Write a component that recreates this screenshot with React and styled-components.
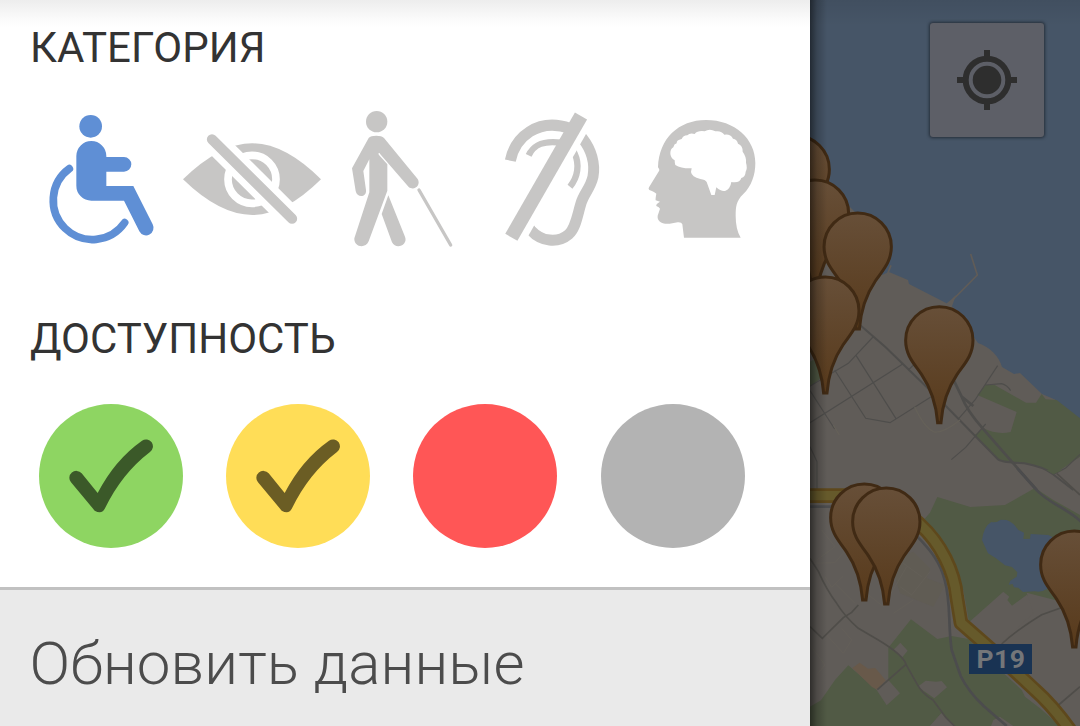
import React from "react";
import styled, { createGlobalStyle } from "styled-components";

const GlobalStyle = createGlobalStyle`
  * { box-sizing: border-box; }
  body { margin: 0; overflow: hidden; font-family: Roboto, "Liberation Sans", sans-serif; }
`;

const Screen = styled.div`
  display: flex;
  width: 1080px;
  height: 726px;
  overflow: hidden;
  background: #fff;
`;

const Drawer = styled.aside`
  display: flex;
  flex-direction: column;
  flex: 0 0 810px;
  background: linear-gradient(#ededed, #fafafa 18px, #fff 27px);
`;

const Section = styled.section`
  flex: 0 0 ${(p) => p.$height}px;
  padding-top: 23px;
`;

const Heading = styled.h2`
  margin: 0;
  padding-left: ${(p) => p.$indent}px;
  font-size: 42px;
  line-height: 50px;
  font-weight: 400;
  letter-spacing: ${(p) => p.$spacing}px;
  color: #333;
`;

const CategoryRow = styled.div`
  display: flex;
  gap: 10px;
  padding: 27px 0 0 40px;
`;

const CategoryButton = styled.button`
  display: flex;
  padding: 0;
  border: 0;
  background: none;
  color: ${(p) => (p.$active ? "#5f8fd5" : "#c7c6c5")};
`;

const LevelRow = styled.div`
  display: flex;
  gap: 43.2px;
  padding: 40px 0 0 39px;
`;

const LevelButton = styled.button`
  width: 144px;
  height: 144px;
  padding: 0;
  border: 0;
  border-radius: 50%;
  background: ${(p) => p.$color};
  svg { display: block; }
`;

const RefreshButton = styled.button`
  flex: 1;
  padding: 12px 0 0 29.5px;
  border: 0;
  border-top: 3px solid #c1c1c1;
  background: #eaeaea;
  color: #4c4c4c;
  font-family: inherit;
  font-size: 60px;
  line-height: 70px;
  font-weight: 300;
  letter-spacing: 0.13px;
  text-align: left;
`;

const MapPane = styled.main`
  position: relative;
  flex: 1;
  overflow: hidden;
  background: #465567;
`;

const MapDrawing = styled.svg`
  display: block;
`;

const MapShade = styled.div`
  position: absolute;
  inset: 0;
  background:
    linear-gradient(90deg, rgba(0, 0, 0, 0.5), rgba(0, 0, 0, 0.2) 7px, transparent 17px),
    linear-gradient(rgba(0, 0, 0, 0.07), transparent 26px);
`;

const LocateButton = styled.button`
  position: absolute;
  top: 23px;
  right: 36px;
  display: flex;
  align-items: center;
  justify-content: center;
  width: 114px;
  height: 114px;
  padding: 0;
  border: 0;
  border-radius: 3px;
  background: #5d5f67;
  box-shadow: 0 0 3px 1px rgba(20, 26, 34, 0.65);
`;

function Wheelchair() {
  return (
    <svg width="125" height="160" viewBox="30 0 375 480" fill="currentColor">
      <circle cx="182" cy="79" r="34" />
      <path d="M139 168a45 45 0 0 1 90 0v3h53a22 22 0 0 1 0 44h-53v43h81l58 115a22 22 0 0 1-40 21L282 302h-98a45 45 0 0 1-45-45Z" />
      <path d="M118 206A117.600 117.600 0 1 0 284 368" fill="none" stroke="currentColor" strokeWidth="23" strokeLinecap="round" />
    </svg>
  );
}

function LowVision() {
  return (
    <svg width="150" height="160" viewBox="0 0 450 480" fill="currentColor">
      <path d="M24 238Q135 130 232 130T438 238Q330 345 232 345T24 238Z" />
      <circle cx="231" cy="238" r="72" fill="none" stroke="#fff" strokeWidth="23" />
      <path d="M111 118L351 356" stroke="#fff" strokeWidth="72" />
      <path d="M90 80L145 135" stroke="#fff" strokeWidth="72" />
      <path d="M111 118L351 356" stroke="currentColor" strokeWidth="31" strokeLinecap="round" />
    </svg>
  );
}

function CaneWalker() {
  return (
    <svg width="130" height="160" viewBox="0 0 390 480" fill="currentColor">
      <circle cx="125" cy="65" r="32" />
      <path d="M101 114Q107 107 124 107Q140 107 147 114L248 237C259 255 238 274 221 261L136 163Q133 156 130 161L132 165L157 193V272L101 424C91 448 56 441 58 415L103 277V178L85 213L93 270C96 292 66 295 62 273L51 205Z" />
      <path d="M160 286L210 410C220 434 184 451 171 427L140 342Z" />
      <path d="M252 270L347 435" fill="none" stroke="currentColor" strokeWidth="10" strokeLinecap="round" />
    </svg>
  );
}

function HearingLoss() {
  return (
    <svg width="145" height="160" viewBox="-45 0 435 480" fill="none" stroke="currentColor">
      <path d="M61 182C75 112 143 52 240 85" strokeWidth="33" />
      <path d="M116 166C132 132 163 121 214 128" strokeWidth="19" />
      <path d="M266 100L279 117C303 148 316 190 309 230C301 266 282 279 273 310C261 349 257 385 236 403C203 431 154 425 123 391L112 378" strokeWidth="33" />
      <path d="M245 143L254 161C269 193 264 231 240 260" strokeWidth="19" />
      <path d="M71.750 442.250L300.750 38.250" stroke="#fff" strokeWidth="41" />
      <path d="M64 412L273 48" strokeWidth="42" />
    </svg>
  );
}

function HeadBrain() {
  return (
    <svg width="145" height="160" viewBox="-15 0 435 480">
      <path fill="currentColor" d="M69 202C72 115 131 60 213 60C300 60 361 117 361 189C361 226 349 258 325 282C303 303 302 321 302 348Q302 389 317 413H147L142 373Q140 366 128 367L104 371C78 373 66 362 68 347L75 326Q73 322 64 318Q62 312 75 305L62 301Q61 296 64 281Q60 277 43 270Q39 267 42 262L72 213Q75 210 69 202Z" />
      <path fill="#fff" d="M121 195Q119 188 119 181Q106 174 106 160Q106 147 115 142Q117 132 125 130Q124 120 140 117Q144 107 157 106Q164 98 179 102Q188 91 209 94Q224 85 241 94Q259 91 268 104Q286 101 294 116Q306 117 309 131Q324 137 323 155Q335 171 333 188Q338 204 332 215Q331 231 319 234Q315 250 289 246Q286 267 270 273Q258 275 244 262L239 285H229L215 246Q211 239 196 237Q170 231 168 216L170 205Q138 206 121 195Z" />
    </svg>
  );
}

function Check() {
  return (
    <svg width="144" height="144" viewBox="0 0 432 432" fill="rgba(0,0,0,0.58)">
      <path d="M96 235A20 20 0 0 1 128 208L176 267Q227 168 309 110A20 20 0 0 1 333 144Q249 208 198 313Q189 332 167 320Z" />
    </svg>
  );
}

function LocateIcon() {
  return (
    <svg width="60" height="60" viewBox="-30 -30 60 60" fill="none" stroke="#2e2e2e" strokeWidth="6">
      <circle r="21.300" />
      <circle r="14.300" fill="#2e2e2e" stroke="none" />
      <path d="M0-30V-22M0 22V30M-30 0H-22M22 0H30" />
    </svg>
  );
}

const PINS = [
  [795.7, 169.3],
  [815, 213.7],
  [857.7, 246.7],
  [825.3, 310.7],
  [939.3, 340.3],
  [864.3, 517.7],
  [886.3, 521.7],
  [1074.3, 564.7],
];

function MapPin({ x, y }) {
  return (
    <path
      transform={`translate(${x} ${y}) scale(.33333)`}
      d="M-5 247C-9 197-23 147-53 103C-73 73-101 47-101 0A101 101 0 0 1 101 0C101 47 73 73 53 103C23 147 9 197 5 247Z"
      fill="url(#pin)"
      stroke="#402a14"
      strokeWidth="9"
    />
  );
}

const HIGHWAY =
  "M0 77H150C260 77 310 115 359 163C423 221 463 305 470 380L483 459L595 557L705 660Q756 705 810 780";

function CityMap() {
  return (
    <MapDrawing width="270" height="726" viewBox="810 0 270 726">
      <defs>
        <linearGradient id="pin" x1="0" y1="0" x2="0" y2="1">
          <stop offset="0" stopColor="#674f38" />
          <stop offset="1" stopColor="#583a1b" />
        </linearGradient>
      </defs>
      <path fill="#605c58" d="M810 180L849 206L856 213L882 275L889 272L908 280L909 284L948 304L953 307L978 343C990 347 999 356 1002 367L1014 374L1020 373L1042 394L1056 400L1080 419V726H810Z" />
      <g transform="translate(800 240) scale(.33333)" fill="none" stroke="#4e4d4b" strokeWidth="3.500">
        <path stroke="#605c58" strokeWidth="5" d="M512 42L532 105L440 198M260 108L273 76" />
        <path fill="#605c58" stroke="none" d="M440 190L455 178L468 165L452 210Z" />
        <path fill="#515a45" stroke="none" d="M30 365L80 337L100 385L30 440ZM532 465L557 435L584 435L678 488L708 488L725 462L737 478L770 480L840 535V650L763 702L731 686L673 670L614 666L593 657L524 585L550 565Q590 585 632 576L650 516Z" />
        <path strokeWidth="6" d="M180 255L257 322L420 480L593 657Q602 667 673 670Q729 680 758 702L820 750" />
        <path d="M0 456L145 370L219 291M30 548L307 373M30 452L104 567M104 390L197 535L270 548L396 469M168 346L288 536M325 390L348 368M476 536L525 480L593 377M454 659L497 622L557 552M557 435L605 431Q621 435 632 452M30 620L51 665V750M763 702L797 684L840 643" />
        <path strokeWidth="8" d="M457 412L485 470L520 498M485 470Q500 510 548 565L710 750" />
        <path stroke="#656159" d="M344 500Q370 560 402 576Q430 580 480 540M100 555L118 585" />
      </g>
      <g transform="translate(800 470) scale(.33333)" fill="none" stroke="#4f4d49" strokeWidth="5">
        <path fill="#605c54" stroke="none" d="M270 270L340 245L390 295L380 325L435 345L400 410L300 370Z" />
        <path fill="#515a45" stroke="none" d="M362 160L390 128L412 81L511 111L615 105L705 54L760 90L840 135V395L785 410L680 375L636 407L622 390L628 380L610 365L507 457L490 360L440 260ZM738 0H788L760 13ZM30 710L63 691L105 630L145 586L230 660L260 706L300 670L265 630L265 533L333 448L412 507L455 498L505 507L600 600L665 660L675 680L720 715L780 768H640L600 740L580 768H460L424 730L390 768H30Z" />
        <path fill="#605c58" stroke="none" d="M280 540L301 518L323 542L305 564ZM353 650L377 632L408 635L425 633L441 652L403 685ZM390 768L424 730L465 768ZM573 768L580 750L600 740L625 768ZM665 650L720 714L740 710L800 768H840V380L785 395L680 368L700 430L600 520Z" />
        <path fill="#68594a" stroke="none" d="M157 594L179 578L204 596L226 594L257 631L232 659L216 651Z" />
        <path fill="#465567" stroke="none" d="M546 210Q552 168 574 156Q588 160 602 149L620 150Q640 157 654 179L672 188L670 207L690 206L692 192L745 195Q770 205 780 225V330L742 356Q724 368 705 364L669 366L655 353L642 352L638 342L626 344L631 332L650 320L652 307L636 291L615 286L588 265L564 250Z" />
        <path stroke="#656159" strokeWidth="2" d="M65 180L105 230L30 285M40 280L105 278L150 225M75 320L95 352L130 318M105 340L165 400M200 370L250 410L320 290M280 430L340 390M300 350L335 375L390 305M310 280L365 320M80 495L130 550L155 510L125 475M30 525L75 585L50 615" />
        <path d="M30 265L55 304Q80 360 110 400Q135 440 175 475L235 510Q310 555 318 583L350 640Q367 672 399 690L438 743L470 775" />
        <path d="M30 470L67 505L130 443L155 427L175 405M318 583L232 659M788 412L725 434Q650 480 605 522M840 650L765 714" />
        <path d="M770 10L840 75" />
        <path stroke="#4c4c4d" strokeWidth="8" d="M30 110H110M352 200C397 246 421 280 434 330C454 403 443 460 455 540L482 618Q505 665 551 708L620 768M652-5L710 60C744 100 804 115 845 157" />
        <g strokeLinejoin="round">
          <path stroke="#5e481c" strokeWidth="44" d={HIGHWAY} />
          <path stroke="#665a2b" strokeWidth="28" d={HIGHWAY} />
        </g>
      </g>
      <rect x="969" y="644" width="63" height="30" fill="#193353" />
      <text x="976.500" y="668" fontFamily="Roboto, sans-serif" fontSize="26.500" fontWeight="700" fill="#747679" textLength="48.500">P19</text>
      {PINS.map(([x, y]) => (
        <MapPin key={`${x}-${y}`} x={x} y={y} />
      ))}
    </MapDrawing>
  );
}

const CATEGORIES = [
  { name: "wheelchair", Icon: Wheelchair, active: true },
  { name: "vision", Icon: LowVision },
  { name: "cane", Icon: CaneWalker },
  { name: "hearing", Icon: HearingLoss },
  { name: "mental", Icon: HeadBrain },
];

const LEVELS = [
  { color: "#8ed562", checked: true },
  { color: "#ffdd57", checked: true },
  { color: "#ff5656" },
  { color: "#b3b3b3" },
];

export default function App() {
  return (
    <Screen>
      <GlobalStyle />
      <Drawer>
        <Section $height={291}>
          <Heading $indent={30} $spacing={0.1}>КАТЕГОРИЯ</Heading>
          <CategoryRow>
            {CATEGORIES.map(({ name, Icon, active }) => (
              <CategoryButton key={name} $active={active}>
                <Icon />
              </CategoryButton>
            ))}
          </CategoryRow>
        </Section>
        <Section $height={296}>
          <Heading $indent={30} $spacing={0}>ДОСТУПНОСТЬ</Heading>
          <LevelRow>
            {LEVELS.map(({ color, checked }) => (
              <LevelButton key={color} $color={color}>
                {checked && <Check />}
              </LevelButton>
            ))}
          </LevelRow>
        </Section>
        <RefreshButton>Обновить данные</RefreshButton>
      </Drawer>
      <MapPane>
        <CityMap />
        <LocateButton>
          <LocateIcon />
        </LocateButton>
        <MapShade />
      </MapPane>
    </Screen>
  );
}
